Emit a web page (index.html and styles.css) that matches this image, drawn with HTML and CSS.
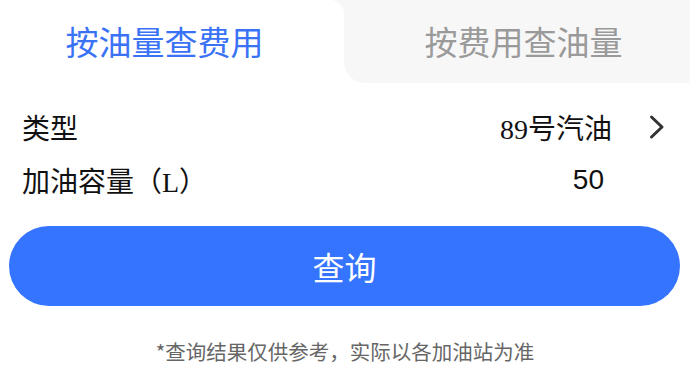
FILE: index.html
```html
<!DOCTYPE html>
<html lang="zh">
<head>
<meta charset="utf-8">
<link rel="stylesheet" href="styles.css">
</head>
<body>
<div class="page">
  <div class="tabs">
    <div class="tab tab-active">按油量查费用</div>
    <div class="tab tab-idle">按费用查油量</div>
  </div>
  <div class="form">
    <div class="row">
      <span class="label">类型</span>
      <span class="value">89号汽油</span>
      <span class="arrow">
        <svg width="18" height="26" viewBox="0 0 18 26"><path d="M3.5 3 L14 13 L3.5 23" fill="none" stroke="#333" stroke-width="3" stroke-linecap="round" stroke-linejoin="round"/></svg>
      </span>
    </div>
    <div class="row">
      <span class="label">加油容量（L）</span>
      <span class="value value-num">50</span>
      <span class="arrow"></span>
    </div>
  </div>
  <div class="btn-wrap">
    <div class="btn">查询</div>
  </div>
  <div class="note">*查询结果仅供参考，实际以各加油站为准</div>
</div>
</body>
</html>
```
FILE: styles.css
```css
html, body {
  margin: 0;
  padding: 0;
  background: #fff;
}
.page {
  width: 690px;
  font-family: "Noto Sans CJK SC", sans-serif;
}
.tabs {
  display: flex;
  height: 83px;
  background: linear-gradient(#f7f7f7 50%, #fff 50%);
}
.tab {
  display: flex;
  align-items: center;
  justify-content: center;
  font-size: 33px;
  line-height: 1;
}
.tab-active {
  width: 344px;
  background: #fff;
  color: #3a72f6;
  border-top-right-radius: 14px;
  padding-right: 15px;
  box-sizing: border-box;
}
.tab-idle {
  flex: 1;
  background: #f7f7f7;
  color: #9a9a9a;
  border-bottom-left-radius: 21px;
  padding-left: 13px;
}
.form {
  padding: 17px 0 0 22px;
}
.row {
  display: flex;
  align-items: center;
  height: 53px;
}
.label {
  flex: 1;
  font-family: "Liberation Serif", "Noto Sans CJK SC", serif;
  font-size: 28px;
  color: #111;
}
.value {
  font-family: "Liberation Serif", "Noto Sans CJK SC", serif;
  font-size: 28px;
  color: #111;
}
.value-num {
  font-family: "Liberation Sans", sans-serif;
  margin-right: 8px;
}
.arrow {
  width: 78px;
  display: flex;
  justify-content: center;
  padding-left: 12px;
  box-sizing: border-box;
}
.arrow svg {
  display: block;
}
.btn-wrap {
  padding: 20px 10px 0 9px;
}
.btn {
  height: 80px;
  border-radius: 40px;
  background: #3574ff;
  color: #fff;
  font-size: 32px;
  display: flex;
  align-items: center;
  justify-content: center;
}
.note {
  margin-top: 33px;
  text-align: center;
  font-size: 20.5px;
  color: #666;
  line-height: 24px;
}
```
